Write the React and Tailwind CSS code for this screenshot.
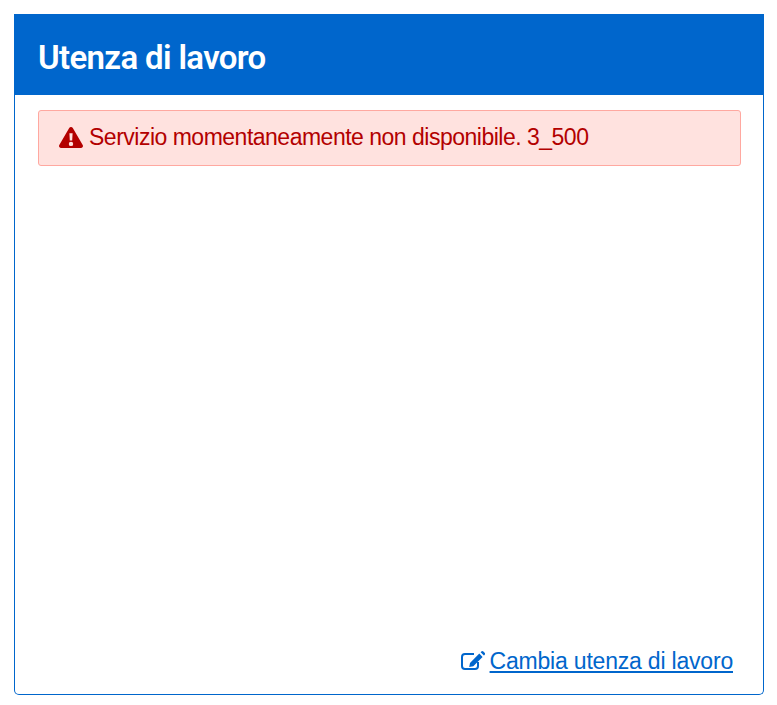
export default function App() {
  return (
    <div className="h-[705px] bg-white p-3.5 pr-[13px] font-['Liberation_Sans',sans-serif]">
      <div className="flex h-[681px] flex-col rounded-b-[5px] border border-t-0 border-[#0066cc]">
        <div className="-mx-px flex h-[81px] items-center bg-[#0066cc] pt-[6px] pl-6">
          <h1 className="font-['Roboto',sans-serif] text-[33px] font-semibold tracking-[-0.65px] text-white">Utenza di lavoro</h1>
        </div>
        <div className="flex flex-1 flex-col justify-between pt-[15px] pr-[22px] pb-[16px] pl-[23px]">
          <div className="flex h-14 items-center gap-[6px] rounded-[3px] border border-[#ffa8a0] bg-[#ffe2df] pb-px pl-5 text-[23px] tracking-[-0.5px] text-[#b30000]">
            <svg viewBox="0 0 24 21" className="h-[21px] w-6" aria-hidden>
              <path fill="currentColor" fillRule="evenodd" d="M10.2 1.1a2.1 2.1 0 0 1 3.6 0l9.9 16.8a2.1 2.1 0 0 1-1.8 3.1H2.1a2.1 2.1 0 0 1-1.8-3.1zM10.4 6.2l.4 7.4h2.4l.4-7.4zM12 14.7a2.2 2.2 0 1 0 0 4.4 2.2 2.2 0 0 0 0-4.4z" />
            </svg>
            <span>Servizio momentaneamente non disponibile. 3_500</span>
          </div>
          <div className="flex items-center justify-end gap-[5px] pr-[8px] text-[23px] tracking-[-0.2px] text-[#0066cc]">
            <svg viewBox="0 0 24 19" className="h-[19px] w-6" aria-hidden>
              <path fill="none" stroke="currentColor" strokeWidth="2" d="M13 3H4a3 3 0 0 0-3 3v9a3 3 0 0 0 3 3h10a3 3 0 0 0 3-3v-4" />
              <path fill="currentColor" d="M18.3 2.6l3.3 3.3-9.3 9.3-4.1.8.8-4.1zM19.6 1.3l.7-.7a1.5 1.5 0 0 1 2.1 0l1.2 1.2a1.5 1.5 0 0 1 0 2.1l-.7.7z" />
            </svg>
            <a href="#" className="underline">Cambia utenza di lavoro</a>
          </div>
        </div>
      </div>
    </div>
  );
}
